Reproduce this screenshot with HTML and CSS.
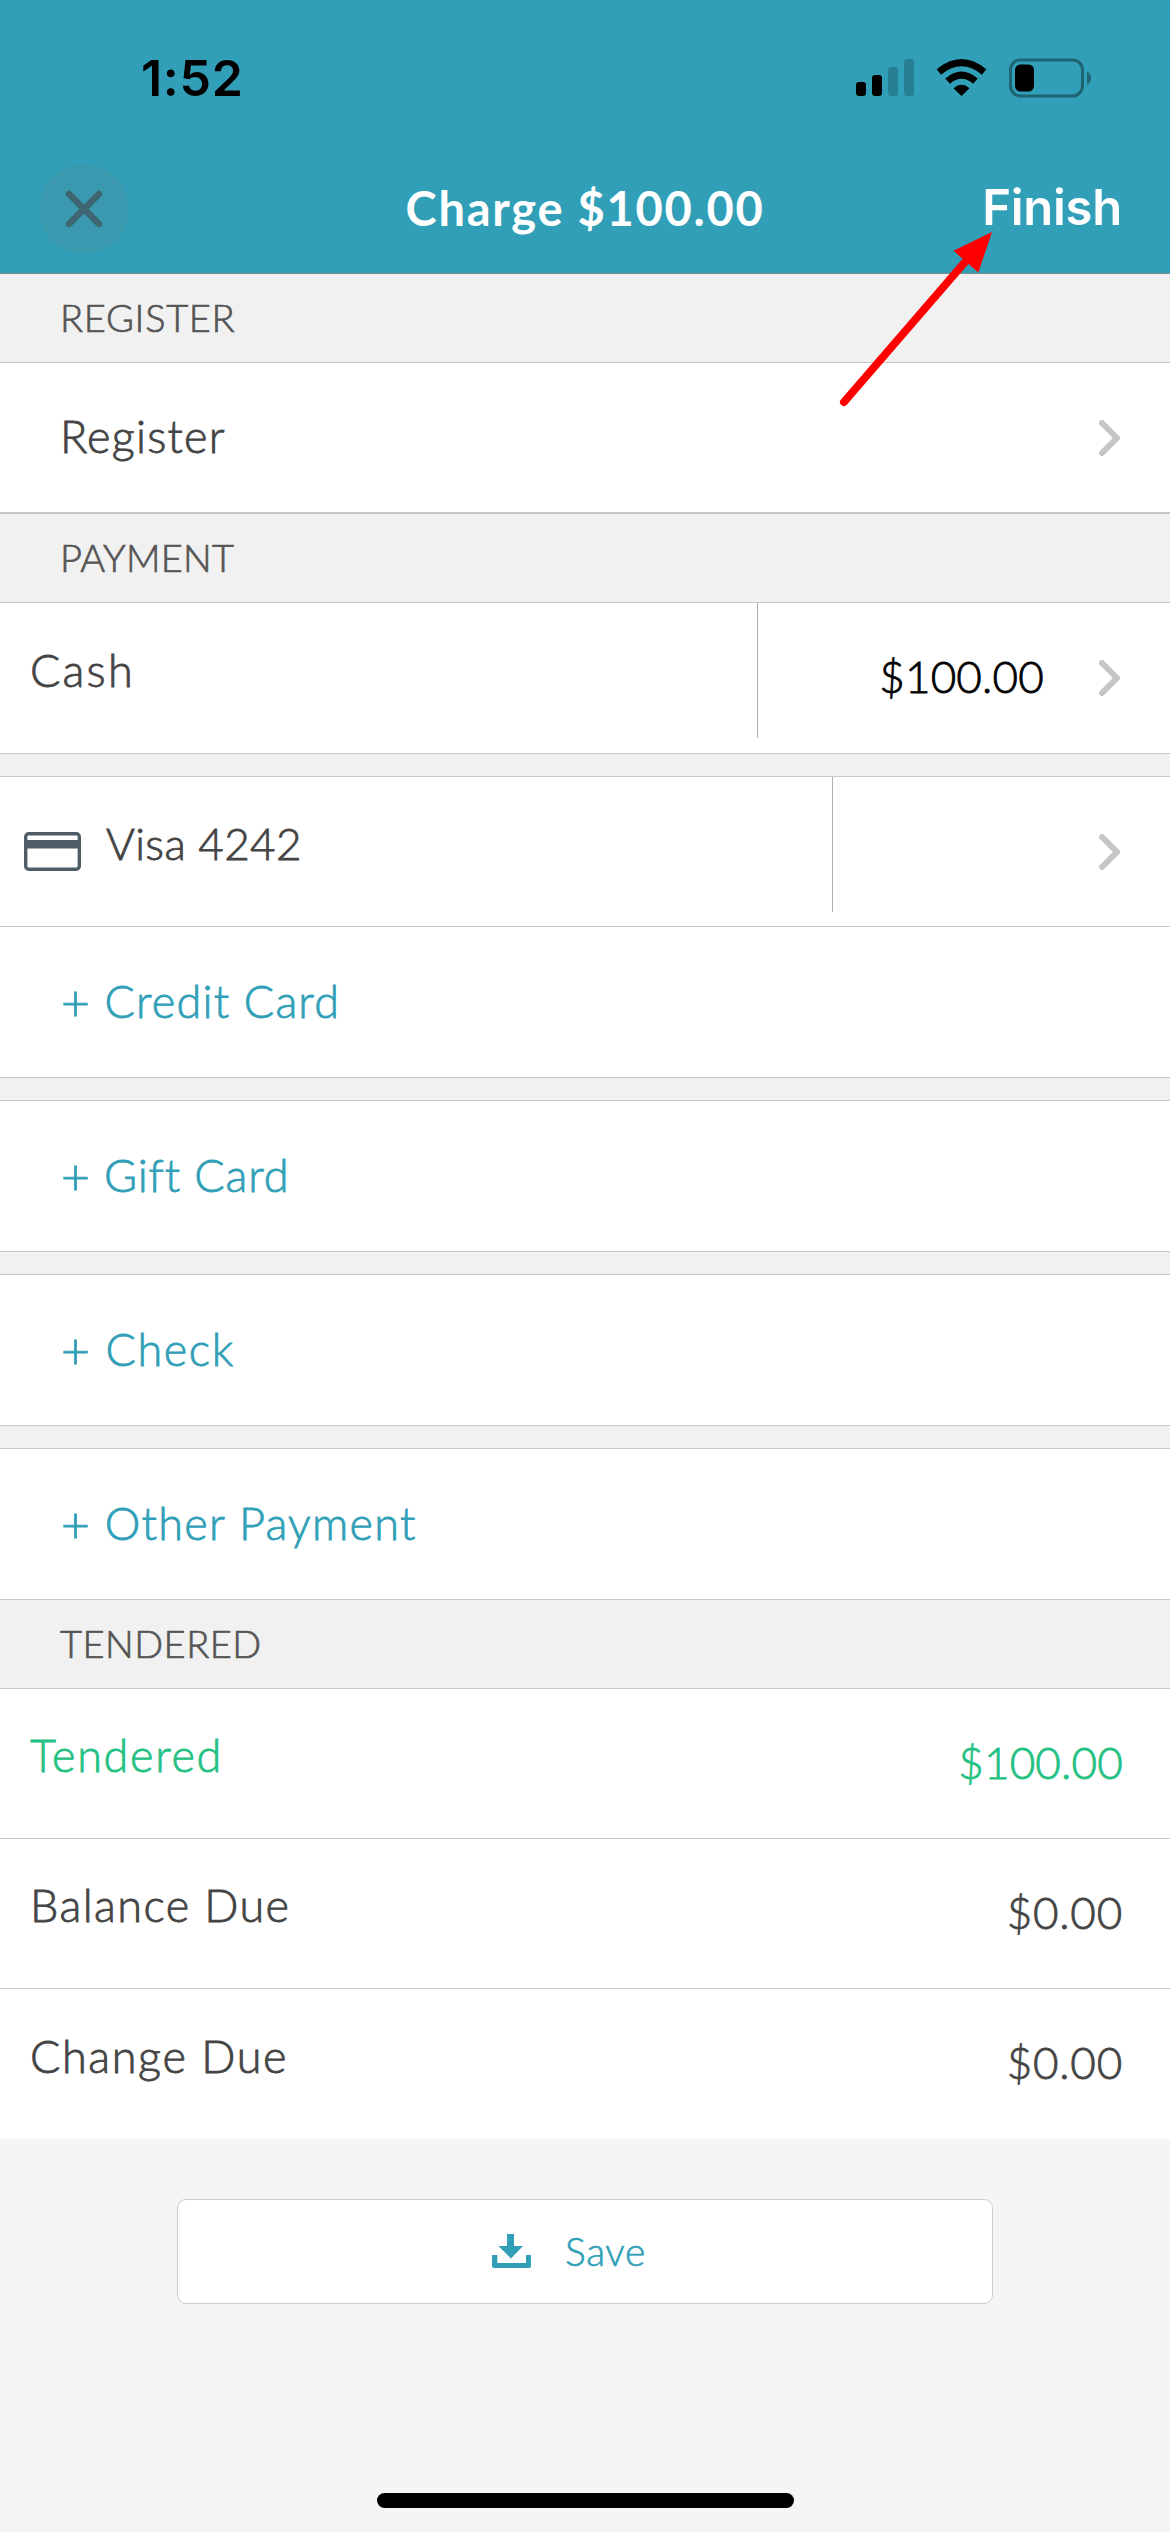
FILE: index.html
```html
<!DOCTYPE html>
<html lang="en">
<head>
<meta charset="utf-8">
<title>Charge $100.00</title>
<link rel="stylesheet" href="styles.css">
</head>
<body>
<div class="screen">
  <header class="header">
    <div class="status-bar">
      <span class="clock">1:52</span>
      <div class="status-icons">
        <svg width="58" height="38" viewBox="0 0 58 38">
          <rect x="0" y="23" width="10" height="14" rx="3"/>
          <rect x="16" y="16" width="10" height="21" rx="3"/>
          <rect x="32" y="8" width="10" height="29" rx="3" opacity=".2"/>
          <rect x="48" y="0" width="10" height="37" rx="3" opacity=".2"/>
        </svg>
        <svg width="51" height="38" viewBox="0 0 51 38">
          <path d="M25.500 37.000 L17.500 29.200 Q25.500 22.400 33.500 29.200 Z"/>
          <path d="M11.600 22.200 Q25.500 10.200 39.400 22.200" fill="none" stroke="#000" stroke-width="7"/>
          <path d="M2.900 13.000 Q25.500 -5.600 48.100 13.000" fill="none" stroke="#000" stroke-width="7"/>
        </svg>
        <svg width="82" height="40" viewBox="0 0 82 40">
          <rect x="1.500" y="2" width="72" height="36" rx="10" fill="none" stroke="#1f6473" stroke-width="3"/>
          <rect x="6" y="6.500" width="19" height="27" rx="5.500"/>
          <path d="M78 13.500 Q82 15.500 82 20 Q82 24.500 78 26.500 Z" fill="#1f6473"/>
        </svg>
      </div>
    </div>
    <nav class="nav">
      <button class="close" aria-label="Close">
        <svg width="38" height="38" viewBox="0 0 38 38"><path d="M4 4L34 34M34 4L4 34" stroke="#3f6472" stroke-width="6.500" stroke-linecap="round"/></svg>
      </button>
      <h1 class="title">Charge $100.00</h1>
      <button class="finish">Finish</button>
    </nav>
  </header>

  <h2 class="section section-register">REGISTER</h2>
  <div class="row row-register">
    <span class="label register">Register</span>
    <svg class="chevron" width="21" height="36" viewBox="0 0 21 36"><path d="M3 3L18 18L3 33"/></svg>
  </div>

  <h2 class="section section-payment">PAYMENT</h2>
  <div class="row row-method">
    <span class="label raised cash">Cash</span>
    <span class="divider"></span>
    <div class="entry entry-wide">
      <span class="amount amount-input">$100.00</span>
      <svg class="chevron" width="21" height="36" viewBox="0 0 21 36"><path d="M3 3L18 18L3 33"/></svg>
    </div>
  </div>
  <div class="spacer"></div>
  <div class="row row-method row-visa">
    <svg class="card" width="57" height="39" viewBox="0 0 57 39">
      <rect x="1.700" y="1.700" width="53.600" height="35.600" rx="3" fill="none" stroke="#4e5d66" stroke-width="3.400"/>
      <rect x="2" y="8" width="53" height="8.500" fill="#4e5d66"/>
    </svg>
    <span class="label raised visa">Visa 4242</span>
    <span class="divider"></span>
    <div class="entry">
      <svg class="chevron" width="21" height="36" viewBox="0 0 21 36"><path d="M3 3L18 18L3 33"/></svg>
    </div>
  </div>
  <div class="row row-action"><span class="label credit"><span class="plus">+</span> Credit Card</span></div>
  <div class="spacer"></div>
  <div class="row row-action"><span class="label gift"><span class="plus">+</span> Gift Card</span></div>
  <div class="spacer"></div>
  <div class="row row-action"><span class="label check"><span class="plus">+</span> Check</span></div>
  <div class="spacer"></div>
  <div class="row row-action"><span class="label other"><span class="plus">+</span> Other Payment</span></div>

  <h2 class="section section-tendered">TENDERED</h2>
  <div class="row row-total positive"><span class="label raised tendered">Tendered</span><span class="amount">$100.00</span></div>
  <div class="row row-total"><span class="label raised balance">Balance Due</span><span class="amount small-amount">$0.00</span></div>
  <div class="row row-total"><span class="label raised change">Change Due</span><span class="amount small-amount">$0.00</span></div>

  <footer class="footer">
    <button class="save">
      <svg width="39" height="34" viewBox="0 0 39 34" fill="#309fb7">
        <path d="M15 0H22V12H31L19 24.500L6.500 12H15Z"/>
        <path d="M0 21H5.300V29H34V21H39V32Q39 34 37 34H2Q0 34 0 32Z"/>
      </svg>
      <span>Save</span>
    </button>
    <div class="home-indicator"></div>
  </footer>

  <svg class="pointer" width="154" height="180" viewBox="0 0 154 180">
    <path d="M6 174L127 34" stroke="#f00" stroke-width="8" stroke-linecap="round"/>
    <path d="M154 4L115.500 22.800L140.300 44.500Z" fill="#f00"/>
  </svg>
</div>
</body>
</html>
```
FILE: styles.css
```css
* { box-sizing: border-box; }

body {
  margin: 0;
  background: #f4f5f7;
  font-family: Lato, "Open Sans", sans-serif;
  font-weight: 300;
  color: #444;
}

button {
  border: 0;
  padding: 0;
  font: inherit;
  color: inherit;
  background: none;
}

svg { display: block; flex: none; }

.screen {
  position: relative;
  display: flex;
  flex-direction: column;
  width: 1170px;
  height: 2532px;
  overflow: hidden;
}

.header {
  height: 274px;
  background: #309fb7;
  border-bottom: 1px solid #84898b;
}

.status-bar {
  display: flex;
  align-items: center;
  justify-content: space-between;
  height: 141px;
  padding: 15px 79px 0 141px;
}

.clock {
  font: 600 50px/60px Inter, sans-serif;
  letter-spacing: 0.7px;
  color: #000;
}

.status-icons { display: flex; align-items: center; gap: 22px; }

.nav {
  display: grid;
  grid-template-columns: 1fr auto 1fr;
  align-items: center;
  height: 132px;
  padding: 0 48px 0 39px;
  color: #fff;
}

.close {
  display: flex;
  align-items: center;
  justify-content: center;
  width: 90px;
  height: 90px;
  margin-top: 4px;
  border-radius: 50%;
  background: #3a99ae;
}

.title {
  margin: 2px 0 0 9px;
  font-size: 47px;
  line-height: 56px;
  font-weight: 700;
  letter-spacing: 1.75px;
}

.finish {
  justify-self: end;
  padding-top: 1px;
  font: 600 49px/60px Inter, sans-serif;
  letter-spacing: -0.25px;
}

.section {
  display: flex;
  align-items: center;
  height: 89px;
  margin: 0;
  padding: 0 0 2px 60px;
  background: #f1f1f1;
  border-bottom: 1px solid #c8c8ca;
  font-size: 38px;
  font-weight: 300;
  color: #555;
  -webkit-text-stroke: 0.7px;
}

.section-register { letter-spacing: 0.7px; }
.section-payment { letter-spacing: 0.25px; }
.section-tendered { letter-spacing: 0.5px; }

.row {
  display: flex;
  align-items: center;
  justify-content: space-between;
  height: 151px;
  background: #fff;
  border-bottom: 1px solid #c8c8ca;
  font-size: 44px;
  line-height: 54px;
  white-space: nowrap;
  -webkit-text-stroke: 0.8px;
}

.row-register { border-bottom-width: 2px; padding: 0 50px 0 60px; }
.row-method { padding-left: 30px; }
.row-visa { height: 150px; padding-left: 24px; }
.row-visa .card { margin-right: 25px; }
.row-action { padding-left: 61px; color: #309fb7; }
.row-total { height: 150px; padding: 0 47px 0 30px; }
.row-total:last-of-type { border-bottom: 0; }

.label { padding-bottom: 3px; font-size: 45px; }
.raised { padding-bottom: 17px; }
.plus { font-size: 50px; line-height: 0; vertical-align: -3px; }
.register { letter-spacing: 1.2px; }
.cash { letter-spacing: 2.2px; }
.visa { font-size: 44px; letter-spacing: 0.35px; }
.credit { letter-spacing: 1.2px; }
.gift { letter-spacing: 0.9px; }
.check { letter-spacing: 1.6px; }
.other { letter-spacing: 1.3px; }
.tendered { letter-spacing: 1.65px; }
.balance { letter-spacing: 1.43px; }
.change { letter-spacing: 1.6px; }

.positive { color: #24c184; }
.amount { padding-bottom: 4px; letter-spacing: 0.2px; }
.small-amount { letter-spacing: 0.8px; }
.amount-input { color: #000; }

.divider {
  align-self: flex-start;
  width: 1px;
  height: 135px;
  margin-left: auto;
  background: #b0b0b3;
}

.entry {
  display: flex;
  align-items: center;
  justify-content: flex-end;
  gap: 55px;
  width: 337px;
  padding-right: 50px;
}

.entry-wide { width: 412px; }

.chevron path {
  fill: none;
  stroke: #c5c5c7;
  stroke-width: 6;
  stroke-linecap: round;
  stroke-linejoin: round;
}

.spacer { height: 23px; background: #f1f1f1; border-bottom: 1px solid #c8c8ca; }

.footer {
  display: flex;
  flex: 1;
  flex-direction: column;
  align-items: center;
  justify-content: space-between;
  padding: 60px 0 24px;
}

.save {
  display: flex;
  align-items: center;
  gap: 34px;
  width: 816px;
  height: 105px;
  padding: 0 0 2px 314px;
  border: 1px solid #cbccce;
  border-radius: 9px;
  background: #fff;
  font-size: 39px;
  letter-spacing: 0.6px;
  color: #309fb7;
  -webkit-text-stroke: 0.6px;
}

.home-indicator {
  width: 417px;
  height: 15px;
  border-radius: 8px;
  background: #000;
}

.pointer { position: absolute; left: 838px; top: 228px; }
```
